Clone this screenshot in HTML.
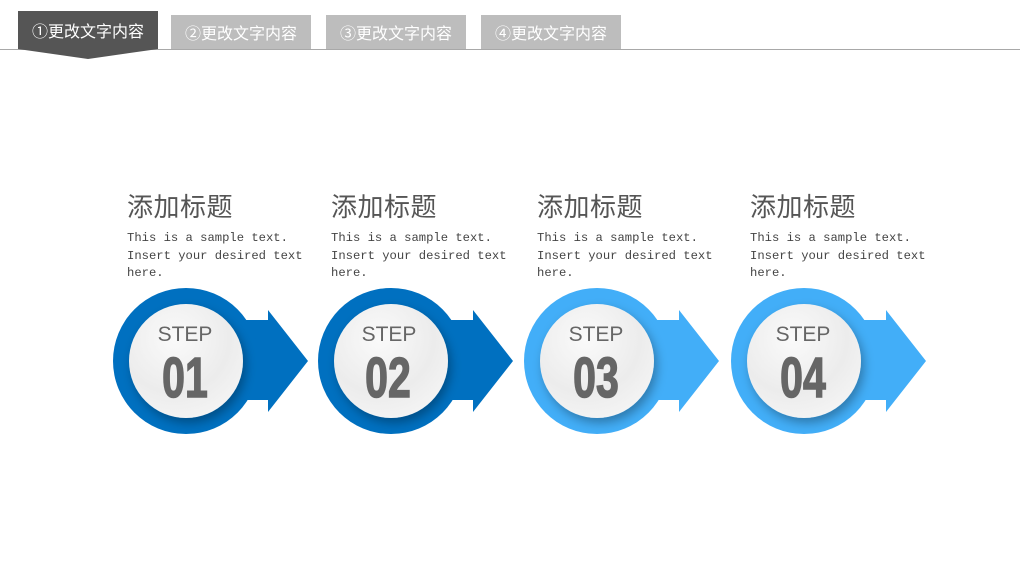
<!DOCTYPE html>
<html><head><meta charset="utf-8"><style>
body{margin:0;width:1020px;height:567px;background:#fff;overflow:hidden;position:relative;font-family:"Liberation Sans","Noto Sans CJK SC",sans-serif}
.tab{position:absolute;top:15px;height:34px;width:140px;background:#bdbdbd;color:#fff;font-size:16px;line-height:40px;text-align:center}
.t{position:absolute;font-size:26px;color:#555;top:187px;letter-spacing:0.5px}
.d{position:absolute;top:230px;font-family:"Liberation Mono","Noto Serif CJK SC",monospace;font-size:12.2px;line-height:17.5px;color:#444;white-space:pre}
</style></head><body>
<div style="position:absolute;left:0;top:49px;width:1020px;height:1px;background:#a8a8a8"></div>
<svg style="position:absolute;left:18px;top:11px" width="140" height="49"><polygon points="0,0 140,0 140,38 70,48 0,38" fill="#555"/></svg>
<div class="tab" style="left:18px;top:11px;background:none;line-height:44px;height:38px">①更改文字内容</div>
<div class="tab" style="left:171px">②更改文字内容</div>
<div class="tab" style="left:326px">③更改文字内容</div>
<div class="tab" style="left:481px">④更改文字内容</div>

<div class="t" style="left:127px">添加标题</div>
<div class="t" style="left:331px">添加标题</div>
<div class="t" style="left:537px">添加标题</div>
<div class="t" style="left:750px">添加标题</div>
<div class="d" style="left:127px">This is a sample text.
Insert your desired text
here.</div>
<div class="d" style="left:331px">This is a sample text.
Insert your desired text
here.</div>
<div class="d" style="left:537px">This is a sample text.
Insert your desired text
here.</div>
<div class="d" style="left:750px">This is a sample text.
Insert your desired text
here.</div>

<svg style="position:absolute;left:0;top:0" width="1020" height="567">
<defs>
<radialGradient id="w" cx="0.4" cy="0.3" r="0.8"><stop offset="0" stop-color="#fafafa"/><stop offset="0.6" stop-color="#ececec"/><stop offset="1" stop-color="#f6f6f6"/></radialGradient>
<filter id="s" x="-30%" y="-30%" width="160%" height="160%"><feDropShadow dx="3" dy="5" stdDeviation="5" flood-color="#000" flood-opacity="0.3"/></filter>
</defs>
<g>
<path d="M186,320 H268 V310 L308,361 L268,412 V400 H186 Z" fill="#0070c0"/>
<circle cx="186" cy="361" r="73" fill="#0070c0"/>
<circle cx="186" cy="361" r="57" fill="url(#w)" filter="url(#s)"/>
</g>
<g>
<path d="M391,320 H473 V310 L513,361 L473,412 V400 H391 Z" fill="#0070c0"/>
<circle cx="391" cy="361" r="73" fill="#0070c0"/>
<circle cx="391" cy="361" r="57" fill="url(#w)" filter="url(#s)"/>
</g>
<g>
<path d="M597,320 H679 V310 L719,361 L679,412 V400 H597 Z" fill="#42aef8"/>
<circle cx="597" cy="361" r="73" fill="#42aef8"/>
<circle cx="597" cy="361" r="57" fill="url(#w)" filter="url(#s)"/>
</g>
<g>
<path d="M804,320 H886 V310 L926,361 L886,412 V400 H804 Z" fill="#42aef8"/>
<circle cx="804" cy="361" r="73" fill="#42aef8"/>
<circle cx="804" cy="361" r="57" fill="url(#w)" filter="url(#s)"/>
</g>
<g font-family="Liberation Sans,sans-serif" fill="#666" text-anchor="middle">
<text x="185" y="341" font-size="21">STEP</text>
<text x="389" y="341" font-size="21">STEP</text>
<text x="596" y="341" font-size="21">STEP</text>
<text x="803" y="341" font-size="21">STEP</text>
</g>
<g font-family="Liberation Sans Narrow,Liberation Sans,sans-serif" font-weight="bold" fill="#666" stroke="#666" stroke-width="1.5" text-anchor="middle" font-size="57">
<text transform="translate(185,397) scale(0.72,1)">01</text>
<text transform="translate(388,397) scale(0.72,1)">02</text>
<text transform="translate(596,397) scale(0.72,1)">03</text>
<text transform="translate(803,397) scale(0.72,1)">04</text>
</g>
</svg>
</body></html>
